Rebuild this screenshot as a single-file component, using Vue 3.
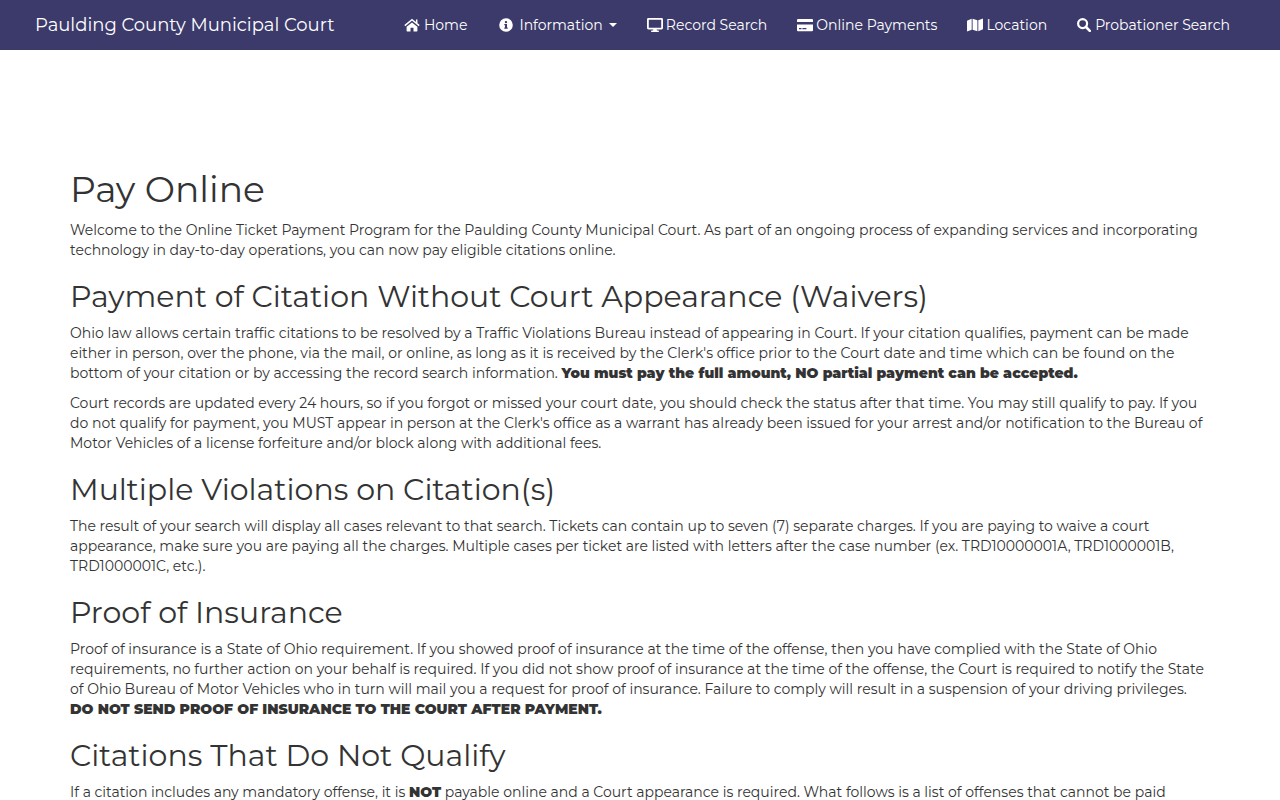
<script setup>
const links = [
  { icon: 'home', label: 'Home' },
  { icon: 'info', label: 'Information', caret: true },
  { icon: 'desktop', label: 'Record Search' },
  { icon: 'card', label: 'Online Payments' },
  { icon: 'map', label: 'Location' },
  { icon: 'search', label: 'Probationer Search' },
]
</script>

<template>
  <header class="navbar">
    <a class="brand" href="#">Paulding County Municipal Court</a>
    <nav aria-label="Main">
      <ul class="links">
        <li v-for="link in links" :key="link.label">
          <a href="#" class="link" :class="'link-' + link.icon">
            <svg v-if="link.icon === 'home'" class="icon" viewBox="0 0 16 14" aria-hidden="true">
              <path d="M8 4.4 13.4 8.8V12.8a.6.6 0 0 1-.6.6H9.5V9.8H6.5v3.6H3.2a.6.6 0 0 1-.6-.6V8.8z" />
              <path d="M.8 7.6 8 1.7l7.2 5.9M12.7 1.6v3.6" fill="none" stroke="currentColor" stroke-width="1.5" />
            </svg>
            <svg v-else-if="link.icon === 'info'" class="icon round" viewBox="0 0 14 14" aria-hidden="true">
              <path fill-rule="evenodd" d="M7 .2a6.8 6.8 0 1 1 0 13.6A6.8 6.8 0 0 1 7 .2zM7 2.9a1.2 1.2 0 1 0 0 2.4 1.2 1.2 0 0 0 0-2.4zM5.3 6v1.2h.7v2.4h-.7v1.2h3.4V9.6H8V6z" />
            </svg>
            <svg v-else-if="link.icon === 'desktop'" class="icon" viewBox="0 0 16 14" aria-hidden="true">
              <path fill-rule="evenodd" d="M1.4 0h13.2A1.4 1.4 0 0 1 16 1.4v8.6a1.4 1.4 0 0 1-1.4 1.4H9.6l.4 1.2h1.3a.7.7 0 0 1 0 1.4H4.7a.7.7 0 0 1 0-1.4H6l.4-1.2h-5A1.4 1.4 0 0 1 0 10V1.4A1.4 1.4 0 0 1 1.4 0zM1.8 1.7v8h12.4v-8z" />
            </svg>
            <svg v-else-if="link.icon === 'card'" class="icon" viewBox="0 0 16 14" aria-hidden="true">
              <path fill-rule="evenodd" d="M0 4V2a1 1 0 0 1 1-1h14a1 1 0 0 1 1 1v2zM0 6.5h16V12.3a1 1 0 0 1-1 1H1a1 1 0 0 1-1-1zM2 10v1.3h2.5V10zm3.4 0v1.3h4V10z" />
            </svg>
            <svg v-else-if="link.icon === 'map'" class="icon" viewBox="0 0 16 14" aria-hidden="true">
              <path d="M0 3.3a.8.8 0 0 1 .5-.8L4.7.8v10.9L.7 13.3a.5.5 0 0 1-.7-.5zM5.6.8l4.8 1.5v10.9l-4.8-1.5zM11.3 2.3l4-1.6a.5.5 0 0 1 .7.5v9.5a.8.8 0 0 1-.5.8l-4.2 1.7z" />
            </svg>
            <svg v-else class="icon round" viewBox="0 0 14 14" aria-hidden="true">
              <circle cx="5.6" cy="5.6" r="4.5" fill="none" stroke="currentColor" stroke-width="2.2" />
              <path d="m9 9 3.8 3.8" fill="none" stroke="currentColor" stroke-width="2.6" stroke-linecap="round" />
            </svg>
            <span>{{ link.label }}</span>
            <span v-if="link.caret" class="caret"></span>
          </a>
        </li>
      </ul>
    </nav>
  </header>

  <main class="content">
    <h1>Pay Online</h1>
    <p>
      Welcome to the Online Ticket Payment Program for the Paulding County Municipal Court. As part of an ongoing process of expanding services and incorporating
      technology in day-to-day operations, you can now pay eligible citations online.
    </p>

    <h2>Payment of Citation Without Court Appearance (Waivers)</h2>
    <p>
      Ohio law allows certain traffic citations to be resolved by a Traffic Violations Bureau instead of appearing in Court. If your citation qualifies, payment can be made
      either in person, over the phone, via the mail, or online, as long as it is received by the Clerk's office prior to the Court date and time which can be found on the
      bottom of your citation or by accessing the record search information. <strong>You must pay the full amount, NO partial payment can be accepted.</strong>
    </p>
    <p>
      Court records are updated every 24 hours, so if you forgot or missed your court date, you should check the status after that time. You may still qualify to pay. If you
      do not qualify for payment, you MUST appear in person at the Clerk's office as a warrant has already been issued for your arrest and/or notification to the Bureau of
      Motor Vehicles of a license forfeiture and/or block along with additional fees.
    </p>

    <h2>Multiple Violations on Citation(s)</h2>
    <p>
      The result of your search will display all cases relevant to that search. Tickets can contain up to seven (7) separate charges. If you are paying to waive a court
      appearance, make sure you are paying all the charges. Multiple cases per ticket are listed with letters after the case number (ex. TRD10000001A, TRD1000001B,
      TRD1000001C, etc.).
    </p>

    <h2>Proof of Insurance</h2>
    <p>
      Proof of insurance is a State of Ohio requirement. If you showed proof of insurance at the time of the offense, then you have complied with the State of Ohio
      requirements, no further action on your behalf is required. If you did not show proof of insurance at the time of the offense, the Court is required to notify the State
      of Ohio Bureau of Motor Vehicles who in turn will mail you a request for proof of insurance. Failure to comply will result in a suspension of your driving privileges.
      <strong>DO NOT SEND PROOF OF INSURANCE TO THE COURT AFTER PAYMENT.</strong>
    </p>

    <h2>Citations That Do Not Qualify</h2>
    <p>
      If a citation includes any mandatory offense, it is <strong>NOT</strong> payable online and a Court appearance is required. What follows is a list of offenses that cannot be paid
    </p>
  </main>
</template>

<style>
body {
  background: #fff;
}
</style>

<style scoped>
.navbar,
.content {
  font-family: Montserrat, Inter, "Open Sans", sans-serif;
  box-sizing: border-box;
}
.navbar {
  display: flex;
  align-items: center;
  justify-content: space-between;
  min-height: 50px;
  padding: 0 50px 0 35px;
  background: #3c3a6b;
}
.brand,
.link {
  color: #fff;
  text-decoration: none;
  white-space: nowrap;
}
.brand {
  font-size: 18px;
  line-height: 20px;
}
.links {
  display: flex;
  flex-wrap: wrap;
  gap: 30px;
  margin: 0;
  padding: 0;
  list-style: none;
}
.link {
  display: flex;
  align-items: center;
  gap: 4px;
  font-size: 14px;
  line-height: 20px;
}
.link-desktop,
.link-card,
.link-map {
  gap: 3px;
}
.icon {
  width: 16px;
  height: 14px;
  fill: currentColor;
}
.round {
  width: 14px;
}
.link-info {
  gap: 6px;
  padding-left: 2px;
}
.caret {
  border: 4px solid transparent;
  border-top-color: currentColor;
  border-bottom: 0;
}
.content {
  max-width: 1170px;
  margin: 0 auto;
  padding: 120px 15px 0;
  color: #333;
  font-size: 14px;
  line-height: 20px;
  font-weight: 400;
}
h1,
h2 {
  margin: 20px 0 10px;
  font-weight: 400;
}
h1 {
  margin: 0 0 11px;
  font-size: 36px;
  line-height: 39px;
}
h2 {
  font-size: 30px;
  line-height: 33px;
}
p {
  margin: 0 0 10px;
}
strong {
  font-weight: 900;
}
</style>
